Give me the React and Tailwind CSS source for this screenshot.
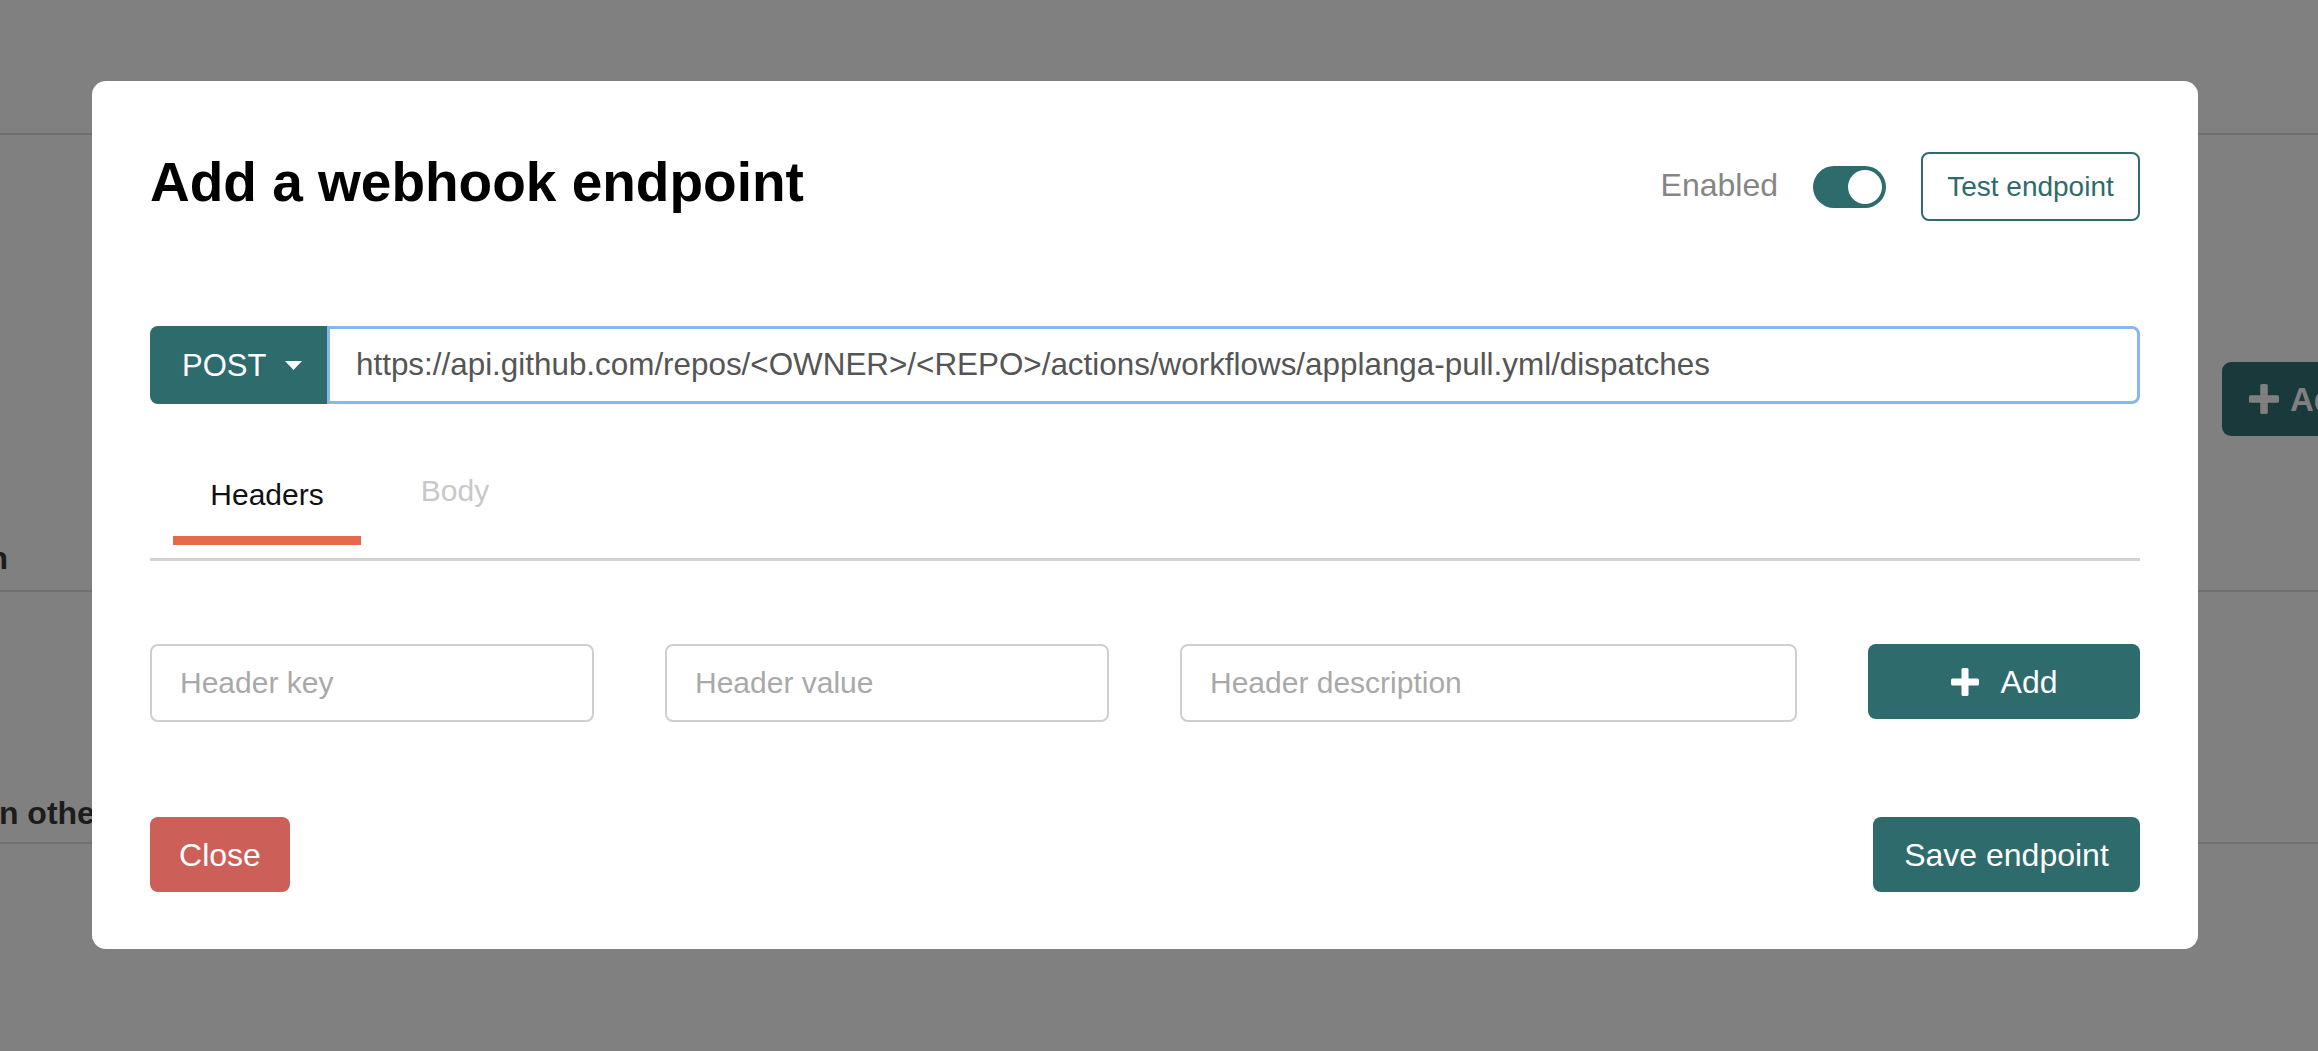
import React from 'react';

const TEAL = 'bg-[#2d6b6c]';

function PlusIcon({ className }) {
  return (
    <svg viewBox="0 0 28 28" className={className} fill="currentColor">
      <rect x="0" y="10.5" width="28" height="7" rx="1.5" />
      <rect x="10.5" y="0" width="7" height="28" rx="1.5" />
    </svg>
  );
}

function Toggle() {
  return (
    <div className={`w-[73px] h-[42px] rounded-full ${TEAL} p-[4px] flex justify-end`}>
      <div className="w-[34px] h-[34px] rounded-full bg-white" />
    </div>
  );
}

function BackgroundPage() {
  return (
    <div className="h-[1051px] bg-[#808080] flex flex-col overflow-hidden">
      {/* top bar */}
      <div className="h-[135px] border-b-2 border-[#707070]" />
      {/* section with dimmed action button */}
      <div className="flex justify-end pt-[227px]">
        <div className="w-[96px] h-[74px] rounded-l-[9px] bg-[#1a393a] flex items-center pl-[27px] gap-[11px] text-[#808080] overflow-hidden">
          <PlusIcon className="w-[30px] h-[30px] shrink-0" />
          <span className="text-[33px] font-bold leading-none">Add</span>
        </div>
      </div>
      <div className="flex pt-[106px]">
        <div className="w-[8px] flex justify-end whitespace-nowrap text-[32px] font-bold text-[#1c1c1c] leading-none">
          Description
        </div>
      </div>
      <div className="mt-[16px] border-b-2 border-[#707070]" />
      <div className="flex pt-[205px]">
        <div className="w-[92px] flex justify-start whitespace-nowrap text-[32px] font-bold text-[#1c1c1c] leading-none -ml-[10px]">
          in others
        </div>
      </div>
      <div className="mt-[13px] border-b-2 border-[#707070]" />
    </div>
  );
}

function WebhookModal() {
  return (
    <div className="absolute left-[92px] top-[81px] w-[2106px] bg-white rounded-[14px] px-[58px] pt-[71px] pb-[57px]">
      {/* header */}
      <div className="h-[69px] flex items-center justify-between">
        <h2 className="text-[55px] font-bold leading-none text-black mb-[8px]">
          Add a webhook endpoint
        </h2>
        <div className="flex items-center">
          <span className="text-[32px] text-[#858585] leading-none mr-[35px] mb-[4px]">Enabled</span>
          <Toggle />
          <button className="ml-[35px] w-[219px] h-[69px] border-2 border-[#2d6b6c] rounded-[8px] text-[28px] text-[#2d6b6c] leading-none">
            Test endpoint
          </button>
        </div>
      </div>

      {/* method + url */}
      <div className="mt-[105px] flex h-[78px]">
        <div className={`w-[177px] ${TEAL} rounded-l-[8px] flex items-center pl-[32px] text-white`}>
          <span className="text-[31px] leading-none">POST</span>
          <svg viewBox="0 0 17 9" className="w-[17px] h-[9px] ml-[19px]" fill="currentColor">
            <path d="M0 0 H17 L8.5 9 Z" />
          </svg>
        </div>
        <input
          readOnly
          value="https://api.github.com/repos/<OWNER>/<REPO>/actions/workflows/applanga-pull.yml/dispatches"
          className="flex-1 border-[3px] border-[#86b7ee] rounded-r-[8px] pl-[26px] text-[31.4px] text-[#555555] outline-none"
        />
      </div>

      {/* tabs */}
      <div className="mt-[76px] border-b-[3px] border-[#d3d3d3] pb-[13px]">
        <div className="flex pl-[23px]">
          <div className="w-[188px] flex flex-col items-center">
            <span className="text-[30px] leading-none text-[#111111]">Headers</span>
            <div className="mt-[26px] w-full h-[9px] bg-[#e5694a]" />
          </div>
          <div className="w-[188px] flex flex-col items-center">
            <span className="text-[30px] leading-none text-[#c8c8c8] -mt-[4px]">Body</span>
          </div>
        </div>
      </div>

      {/* header inputs */}
      <div className="mt-[83px] flex items-start gap-[71px]">
        <input
          placeholder="Header key"
          className="w-[444px] h-[78px] border-2 border-[#cfcfcf] rounded-[8px] pl-[28px] text-[30px] text-[#333] placeholder:text-[#a9a9a9] outline-none"
        />
        <input
          placeholder="Header value"
          className="w-[444px] h-[78px] border-2 border-[#cfcfcf] rounded-[8px] pl-[28px] text-[30px] text-[#333] placeholder:text-[#a9a9a9] outline-none"
        />
        <input
          placeholder="Header description"
          className="flex-1 min-w-0 h-[78px] border-2 border-[#cfcfcf] rounded-[8px] pl-[28px] text-[30px] text-[#333] placeholder:text-[#a9a9a9] outline-none"
        />
        <button className={`w-[272px] h-[75px] ${TEAL} rounded-[8px] flex items-center justify-center gap-[22px] text-white`}>
          <PlusIcon className="w-[28px] h-[28px]" />
          <span className="text-[32px] leading-none">Add</span>
        </button>
      </div>

      {/* footer */}
      <div className="mt-[95px] flex justify-between">
        <button className="w-[140px] h-[75px] bg-[#cc5f58] rounded-[8px] text-white text-[32px] leading-none">
          Close
        </button>
        <button className={`w-[267px] h-[75px] ${TEAL} rounded-[8px] text-white text-[32px] leading-none`}>
          Save endpoint
        </button>
      </div>
    </div>
  );
}

export default function App() {
  return (
    <div className="relative w-[2318px] h-[1051px] overflow-hidden font-['Liberation_Sans',Arial,sans-serif]">
      <BackgroundPage />
      <WebhookModal />
    </div>
  );
}
